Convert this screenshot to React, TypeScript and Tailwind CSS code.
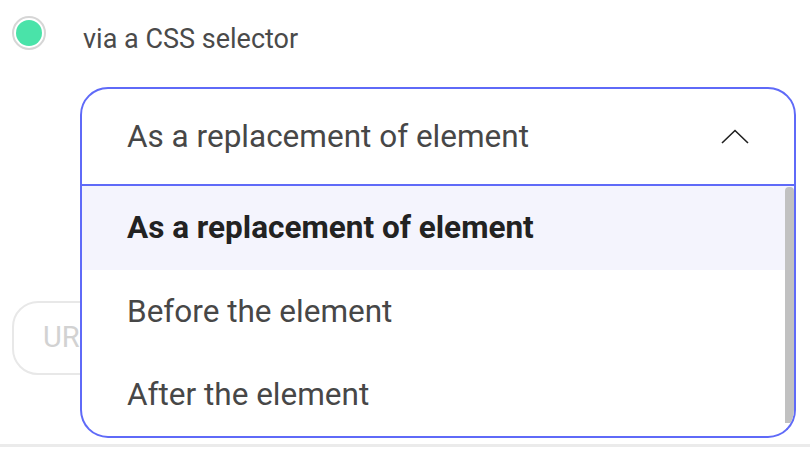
import React from "react";

const options = ["As a replacement of element", "Before the element", "After the element"];

function Radio() {
  return (
    <span className="flex h-[34px] w-[34px] shrink-0 items-center justify-center rounded-full border-2 border-[#d6d6d6] bg-white">
      <span className="h-[26px] w-[26px] rounded-full bg-[#4ae3a9]" />
    </span>
  );
}

function Chevron() {
  return (
    <svg width="28" height="15" viewBox="0 0 28 15" fill="none" aria-hidden="true">
      <path d="M1 14L14 1.5L27 14" stroke="#1f1f1f" strokeWidth="1.6" />
    </svg>
  );
}

export default function App() {
  return (
    <div className="relative h-[455px] w-[810px] overflow-hidden bg-white font-['Roboto',sans-serif]">
      <div className="flex items-start pl-[12px] pt-[16px]">
        <Radio />
        <span className="ml-[37px] mt-[6px] text-[27px] leading-[34px] text-[#4a4a4a]">via a CSS selector</span>
      </div>

      <div className="relative ml-[80px] mt-[31px] w-[716px]">
        <div className="flex h-[99px] items-center justify-between rounded-t-[28px] border-2 border-[#5f6af8] bg-white pl-[45px] pr-[45px]">
          <span className="text-[31.5px] leading-none text-[#474747]">As a replacement of element</span>
          <Chevron />
        </div>

        <div className="absolute left-0 top-full z-10 w-full overflow-hidden rounded-b-[28px] border-2 border-t-0 border-[#5f6af8] bg-white">
          <ul className="relative">
            {options.map((o, i) => (
              <li
                key={o}
                className={
                  i === 0
                    ? "flex h-[84px] items-center bg-[#f4f4fd] pl-[45px] text-[31.5px] font-bold leading-none text-[#222222]"
                    : "flex h-[83px] items-center pl-[45px] text-[31.5px] leading-none text-[#474747]"
                }
              >
                {o}
              </li>
            ))}
            <span className="absolute right-0 top-[1px] h-[236px] w-[9px] rounded-t-[4px] bg-[#c1c1c1]" />
          </ul>
        </div>
      </div>

      <div className="ml-[12px] mt-[115px] flex h-[74px] w-[784px] items-center rounded-[26px] border-2 border-[#e8e8e8] pl-[29px]">
        <span className="text-[29px] text-[#d2d2d2]">URL</span>
      </div>

      <div className="mt-[69px] h-[3px] w-full bg-[#ebebeb]" />
    </div>
  );
}
